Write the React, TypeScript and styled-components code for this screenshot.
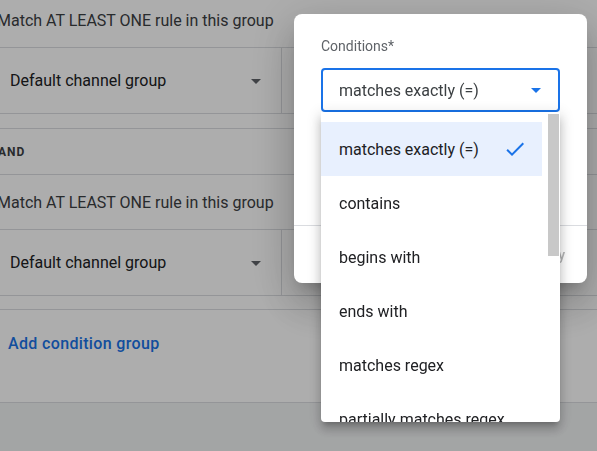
import React from "react";
import styled, { createGlobalStyle } from "styled-components";

const GlobalStyle = createGlobalStyle`
  html, body {
    margin: 0;
    padding: 0;
  }
  body {
    width: 597px;
    height: 451px;
    overflow: hidden;
    background: #f1f3f4;
    font-family: Roboto, "Noto Sans", "Liberation Sans", Arial, sans-serif;
  }
`;

const Page = styled.div`
  height: 451px;
  overflow: hidden;
  background: #f1f3f4;
`;

const Card = styled.div`
  margin: -7px 0 0 -20px;
  background: #fff;
  border-bottom: 1px solid #dadce0;
`;

const Group = styled.div<{ $top?: boolean }>`
  border-top: ${(p) => (p.$top ? "1px solid #dadce0" : "none")};
  border-bottom: 1px solid #dadce0;
`;

const GroupHeader = styled.div`
  height: 54px;
  display: flex;
  align-items: center;
  padding-left: 17px;
  border-bottom: 1px solid #dadce0;
  font-size: 16px;
  color: #3c4043;
`;

const AndRow = styled.div`
  height: 45px;
  display: flex;
  align-items: center;
  padding-left: 18px;
  border-bottom: 1px solid #dadce0;
  font-size: 12px;
  font-weight: 700;
  letter-spacing: 1px;
  color: #3c4043;
`;

const RuleRow = styled.div`
  height: 65px;
  display: flex;
`;

const FieldCell = styled.div`
  box-sizing: border-box;
  width: 302px;
  display: flex;
  align-items: center;
  justify-content: space-between;
  padding: 0 13px 0 30px;
  border-right: 1px solid #dadce0;
  font-size: 16px;
  color: #202124;
`;

const ValueCell = styled.div`
  flex: 1;
`;

const Spacer = styled.div<{ $h: number }>`
  height: ${(p) => p.$h}px;
`;

const AddArea = styled.div`
  height: 93px;
  box-sizing: border-box;
  padding: 24px 0 0 28px;
  border-top: 1px solid #dadce0;
`;

const AddLink = styled.span`
  font-size: 16px;
  line-height: 20px;
  font-weight: 500;
  letter-spacing: 0.35px;
  color: #1a73e8;
`;

const Scrim = styled.div`
  position: fixed;
  inset: 0;
  background: rgba(0, 0, 0, 0.32);
`;

const Dialog = styled.div`
  position: fixed;
  left: 294px;
  top: 14px;
  width: 293px;
  height: 269px;
  display: flex;
  flex-direction: column;
  background: #fff;
  border-radius: 8px;
  box-shadow: 0 11px 15px -7px rgba(0, 0, 0, 0.2),
    0 24px 38px 3px rgba(0, 0, 0, 0.14), 0 9px 46px 8px rgba(0, 0, 0, 0.12);
`;

const DialogBody = styled.div`
  flex: 1;
  padding: 24px 27px 0;
`;

const Label = styled.div`
  font-size: 14px;
  line-height: 16px;
  color: #5f6368;
  margin-bottom: 14px;
`;

const SelectWrap = styled.div`
  position: relative;
`;

const SelectBox = styled.div`
  box-sizing: border-box;
  height: 44px;
  display: flex;
  align-items: center;
  justify-content: space-between;
  padding: 0 10px 0 16px;
  border: 2px solid #1a73e8;
  border-radius: 4px;
  font-size: 16px;
  color: #3c4043;
`;

const Menu = styled.div`
  position: absolute;
  top: 100%;
  left: 0;
  right: 0;
  height: 310px;
  overflow: hidden;
  background: #fff;
  border-radius: 0 0 4px 4px;
  box-shadow: 0 5px 5px -3px rgba(0, 0, 0, 0.2),
    0 8px 10px 1px rgba(0, 0, 0, 0.14), 0 3px 14px 2px rgba(0, 0, 0, 0.12);
  z-index: 2;
`;

const OptionList = styled.div`
  padding: 10px 18px 10px 0;
`;

const ScrollThumb = styled.div`
  position: absolute;
  top: 2px;
  right: 1px;
  width: 11px;
  height: 142px;
  background: #c8c8c8;
`;

const Option = styled.div<{ $selected?: boolean }>`
  height: 54px;
  display: flex;
  align-items: center;
  justify-content: space-between;
  padding: 0 15px 0 18px;
  font-size: 16px;
  color: #202124;
  white-space: nowrap;
  background: ${(p) => (p.$selected ? "#e8f0fe" : "transparent")};
`;

const Footer = styled.div`
  height: 57px;
  display: flex;
  align-items: center;
  justify-content: flex-end;
  gap: 8px;
  padding-right: 14px;
  border-top: 1px solid #dadce0;
`;

const TextButton = styled.span<{ $disabled?: boolean }>`
  padding: 0 8px;
  font-size: 14px;
  font-weight: 500;
  color: ${(p) => (p.$disabled ? "rgba(60, 64, 67, 0.38)" : "#1a73e8")};
`;

const ArrowDown = ({ color }: { color: string }) => (
  <svg width="24" height="24" viewBox="0 0 24 24">
    <path d="M7 10l5 5 5-5z" fill={color} />
  </svg>
);

const Check = () => (
  <svg width="24" height="24" viewBox="0 0 24 24">
    <path d="M9 16.17L4.83 12l-1.42 1.41L9 19 21 7l-1.41-1.41z" fill="#1a73e8" />
  </svg>
);

const options = [
  "matches exactly (=)",
  "contains",
  "begins with",
  "ends with",
  "matches regex",
  "partially matches regex",
  "does not exactly match",
  "does not contain",
  "does not begin with",
  "does not end with",
  "does not match regex",
  "does not partially match regex",
];

const Rule = () => (
  <RuleRow>
    <FieldCell>
      <span>Default channel group</span>
      <ArrowDown color="#5f6368" />
    </FieldCell>
    <ValueCell />
  </RuleRow>
);

export default function App() {
  return (
    <>
      <GlobalStyle />
      <Page>
        <Card>
          <Group>
            <GroupHeader>Match AT LEAST ONE rule in this group</GroupHeader>
            <Rule />
          </Group>
          <Spacer $h={14} />
          <Group $top>
            <AndRow>AND</AndRow>
            <GroupHeader>Match AT LEAST ONE rule in this group</GroupHeader>
            <Rule />
          </Group>
          <Spacer $h={13} />
          <AddArea>
            <AddLink>Add condition group</AddLink>
          </AddArea>
        </Card>
      </Page>
      <Scrim />
      <Dialog>
        <DialogBody>
          <Label>Conditions*</Label>
          <SelectWrap>
            <SelectBox>
              <span>matches exactly (=)</span>
              <ArrowDown color="#1a73e8" />
            </SelectBox>
            <Menu>
              <OptionList>
                {options.map((o, i) => (
                  <Option key={o} $selected={i === 0}>
                    <span>{o}</span>
                    {i === 0 && <Check />}
                  </Option>
                ))}
              </OptionList>
              <ScrollThumb />
            </Menu>
          </SelectWrap>
        </DialogBody>
        <Footer>
          <TextButton $disabled>Cancel</TextButton>
          <TextButton $disabled>Apply</TextButton>
        </Footer>
      </Dialog>
    </>
  );
}
